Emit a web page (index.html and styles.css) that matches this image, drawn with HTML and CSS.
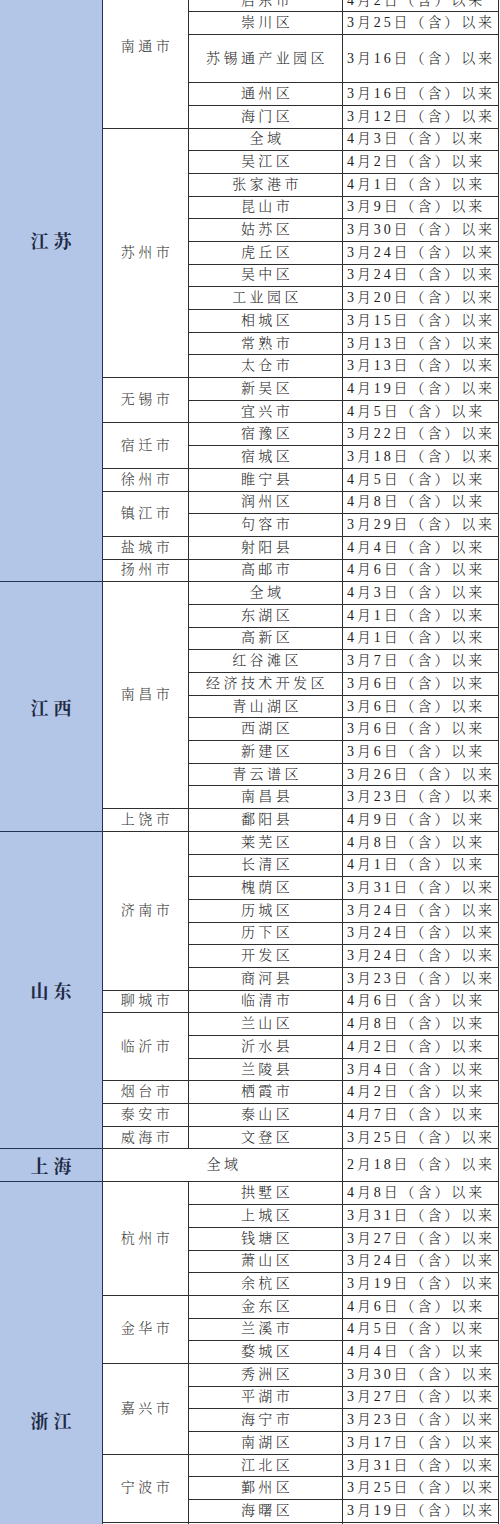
FILE: index.html
```html
<!DOCTYPE html>
<html lang="zh-CN">
<head>
<meta charset="utf-8">
<title>各地时间表</title>
<link rel="stylesheet" href="styles.css">
</head>
<body>
<div class="page">
<table class="sheet">
<colgroup><col class="w-p"><col class="w-c"><col class="w-d"><col class="w-t"></colgroup>
<tbody>
<tr><td class="p" rowspan="29">江苏</td><td class="c" rowspan="3">常州市</td><td class="d">武进区</td><td class="t">4月5日（含）以来</td></tr>
<tr><td class="d">新北区</td><td class="t">4月3日（含）以来</td></tr>
<tr><td class="d">天宁区</td><td class="t">3月28日（含）以来</td></tr>
<tr><td class="c" rowspan="6">南通市</td><td class="d">如东县</td><td class="t">4月4日（含）以来</td></tr>
<tr><td class="d">启东市</td><td class="t">4月2日（含）以来</td></tr>
<tr><td class="d">崇川区</td><td class="t">3月25日（含）以来</td></tr>
<tr class="tall"><td class="d">苏锡通产业园区</td><td class="t">3月16日（含）以来</td></tr>
<tr><td class="d">通州区</td><td class="t">3月16日（含）以来</td></tr>
<tr><td class="d">海门区</td><td class="t">3月12日（含）以来</td></tr>
<tr><td class="c" rowspan="11">苏州市</td><td class="d">全域</td><td class="t">4月3日（含）以来</td></tr>
<tr><td class="d">吴江区</td><td class="t">4月2日（含）以来</td></tr>
<tr><td class="d">张家港市</td><td class="t">4月1日（含）以来</td></tr>
<tr><td class="d">昆山市</td><td class="t">3月9日（含）以来</td></tr>
<tr><td class="d">姑苏区</td><td class="t">3月30日（含）以来</td></tr>
<tr><td class="d">虎丘区</td><td class="t">3月24日（含）以来</td></tr>
<tr><td class="d">吴中区</td><td class="t">3月24日（含）以来</td></tr>
<tr><td class="d">工业园区</td><td class="t">3月20日（含）以来</td></tr>
<tr><td class="d">相城区</td><td class="t">3月15日（含）以来</td></tr>
<tr><td class="d">常熟市</td><td class="t">3月13日（含）以来</td></tr>
<tr><td class="d">太仓市</td><td class="t">3月13日（含）以来</td></tr>
<tr><td class="c" rowspan="2">无锡市</td><td class="d">新吴区</td><td class="t">4月19日（含）以来</td></tr>
<tr><td class="d">宜兴市</td><td class="t">4月5日（含）以来</td></tr>
<tr><td class="c" rowspan="2">宿迁市</td><td class="d">宿豫区</td><td class="t">3月22日（含）以来</td></tr>
<tr><td class="d">宿城区</td><td class="t">3月18日（含）以来</td></tr>
<tr><td class="c">徐州市</td><td class="d">睢宁县</td><td class="t">4月5日（含）以来</td></tr>
<tr><td class="c" rowspan="2">镇江市</td><td class="d">润州区</td><td class="t">4月8日（含）以来</td></tr>
<tr><td class="d">句容市</td><td class="t">3月29日（含）以来</td></tr>
<tr><td class="c">盐城市</td><td class="d">射阳县</td><td class="t">4月4日（含）以来</td></tr>
<tr><td class="c">扬州市</td><td class="d">高邮市</td><td class="t">4月6日（含）以来</td></tr>

<tr><td class="p" rowspan="11">江西</td><td class="c" rowspan="10">南昌市</td><td class="d">全域</td><td class="t">4月3日（含）以来</td></tr>
<tr><td class="d">东湖区</td><td class="t">4月1日（含）以来</td></tr>
<tr><td class="d">高新区</td><td class="t">4月1日（含）以来</td></tr>
<tr><td class="d">红谷滩区</td><td class="t">3月7日（含）以来</td></tr>
<tr><td class="d">经济技术开发区</td><td class="t">3月6日（含）以来</td></tr>
<tr><td class="d">青山湖区</td><td class="t">3月6日（含）以来</td></tr>
<tr><td class="d">西湖区</td><td class="t">3月6日（含）以来</td></tr>
<tr><td class="d">新建区</td><td class="t">3月6日（含）以来</td></tr>
<tr><td class="d">青云谱区</td><td class="t">3月26日（含）以来</td></tr>
<tr><td class="d">南昌县</td><td class="t">3月23日（含）以来</td></tr>
<tr><td class="c">上饶市</td><td class="d">鄱阳县</td><td class="t">4月9日（含）以来</td></tr>

<tr><td class="p" rowspan="14">山东</td><td class="c" rowspan="7">济南市</td><td class="d">莱芜区</td><td class="t">4月8日（含）以来</td></tr>
<tr><td class="d">长清区</td><td class="t">4月1日（含）以来</td></tr>
<tr><td class="d">槐荫区</td><td class="t">3月31日（含）以来</td></tr>
<tr><td class="d">历城区</td><td class="t">3月24日（含）以来</td></tr>
<tr><td class="d">历下区</td><td class="t">3月24日（含）以来</td></tr>
<tr><td class="d">开发区</td><td class="t">3月24日（含）以来</td></tr>
<tr><td class="d">商河县</td><td class="t">3月23日（含）以来</td></tr>
<tr><td class="c">聊城市</td><td class="d">临清市</td><td class="t">4月6日（含）以来</td></tr>
<tr><td class="c" rowspan="3">临沂市</td><td class="d">兰山区</td><td class="t">4月8日（含）以来</td></tr>
<tr><td class="d">沂水县</td><td class="t">4月2日（含）以来</td></tr>
<tr><td class="d">兰陵县</td><td class="t">3月4日（含）以来</td></tr>
<tr><td class="c">烟台市</td><td class="d">栖霞市</td><td class="t">4月2日（含）以来</td></tr>
<tr><td class="c">泰安市</td><td class="d">泰山区</td><td class="t">4月7日（含）以来</td></tr>
<tr><td class="c">威海市</td><td class="d">文登区</td><td class="t">3月25日（含）以来</td></tr>

<tr class="sh"><td class="p">上海</td><td class="d" colspan="2">全域</td><td class="t">2月18日（含）以来</td></tr>

<tr><td class="p" rowspan="21">浙江</td><td class="c" rowspan="5">杭州市</td><td class="d">拱墅区</td><td class="t">4月8日（含）以来</td></tr>
<tr><td class="d">上城区</td><td class="t">3月31日（含）以来</td></tr>
<tr><td class="d">钱塘区</td><td class="t">3月27日（含）以来</td></tr>
<tr><td class="d">萧山区</td><td class="t">3月24日（含）以来</td></tr>
<tr><td class="d">余杭区</td><td class="t">3月19日（含）以来</td></tr>
<tr><td class="c" rowspan="3">金华市</td><td class="d">金东区</td><td class="t">4月6日（含）以来</td></tr>
<tr><td class="d">兰溪市</td><td class="t">4月5日（含）以来</td></tr>
<tr><td class="d">婺城区</td><td class="t">4月4日（含）以来</td></tr>
<tr><td class="c" rowspan="4">嘉兴市</td><td class="d">秀洲区</td><td class="t">3月30日（含）以来</td></tr>
<tr><td class="d">平湖市</td><td class="t">3月27日（含）以来</td></tr>
<tr><td class="d">海宁市</td><td class="t">3月23日（含）以来</td></tr>
<tr><td class="d">南湖区</td><td class="t">3月17日（含）以来</td></tr>
<tr><td class="c" rowspan="3">宁波市</td><td class="d">江北区</td><td class="t">3月31日（含）以来</td></tr>
<tr><td class="d">鄞州区</td><td class="t">3月25日（含）以来</td></tr>
<tr><td class="d">海曙区</td><td class="t">3月19日（含）以来</td></tr>
<tr><td class="c" rowspan="3">绍兴市</td><td class="d">越城区</td><td class="t">3月15日（含）以来</td></tr>
<tr><td class="d">柯桥区</td><td class="t">3月12日（含）以来</td></tr>
<tr><td class="d">上虞区</td><td class="t">3月10日（含）以来</td></tr>
<tr><td class="c" rowspan="3">温州市</td><td class="d">鹿城区</td><td class="t">3月9日（含）以来</td></tr>
<tr><td class="d">瓯海区</td><td class="t">3月8日（含）以来</td></tr>
<tr><td class="d">龙湾区</td><td class="t">3月6日（含）以来</td></tr>
</tbody>
</table>
</div>
</body>
</html>
```
FILE: styles.css
```css
html, body {
  margin: 0;
  padding: 0;
  background: #ffffff;
}
.page {
  width: 500px;
  height: 1524px;
  overflow: hidden;
  background: #ffffff;
}
.sheet {
  border-collapse: collapse;
  table-layout: fixed;
  width: 499px;
  margin-top: -102px;
  margin-left: -1px;
  font-family: "Liberation Serif", "Noto Serif CJK SC", "Noto Sans CJK SC", serif;
  font-size: 14px;
  color: #2b2b2b;
}
.w-p { width: 103px; }
.w-c { width: 86px; }
.w-d { width: 154px; }
.w-t { width: 156px; }
.sheet tr { height: 22.7px; }
.sheet tr.tall { height: 48px; }
.sheet tr.sh { height: 33px; }
.sheet td {
  border: 1px solid #2e2e2e;
  padding: 0;
  line-height: 16px;
  white-space: nowrap;
  overflow: hidden;
}
.sheet td.p {
  background: #b4c6e7;
  border-color: #22324f;
  text-align: center;
  vertical-align: middle;
  font-family: "Noto Serif CJK SC", "Noto Sans CJK SC", serif;
  font-weight: 700;
  font-size: 18px;
  letter-spacing: 5px;
  padding-left: 5px;
  color: #1e2b45;
}
.sheet td.c {
  text-align: center;
  vertical-align: middle;
  letter-spacing: 3.5px;
  padding-left: 3px;
  color: #3a3a3a;
  font-weight: 300;
}
.sheet td.d {
  text-align: center;
  vertical-align: middle;
  letter-spacing: 3.4px;
  padding-left: 3px;
  color: #2a2a2a;
  font-weight: 300;
}
.sheet td.t {
  text-align: left;
  padding-left: 4px;
  letter-spacing: 2.9px;
  color: #222222;
  font-weight: 300;
}
```
